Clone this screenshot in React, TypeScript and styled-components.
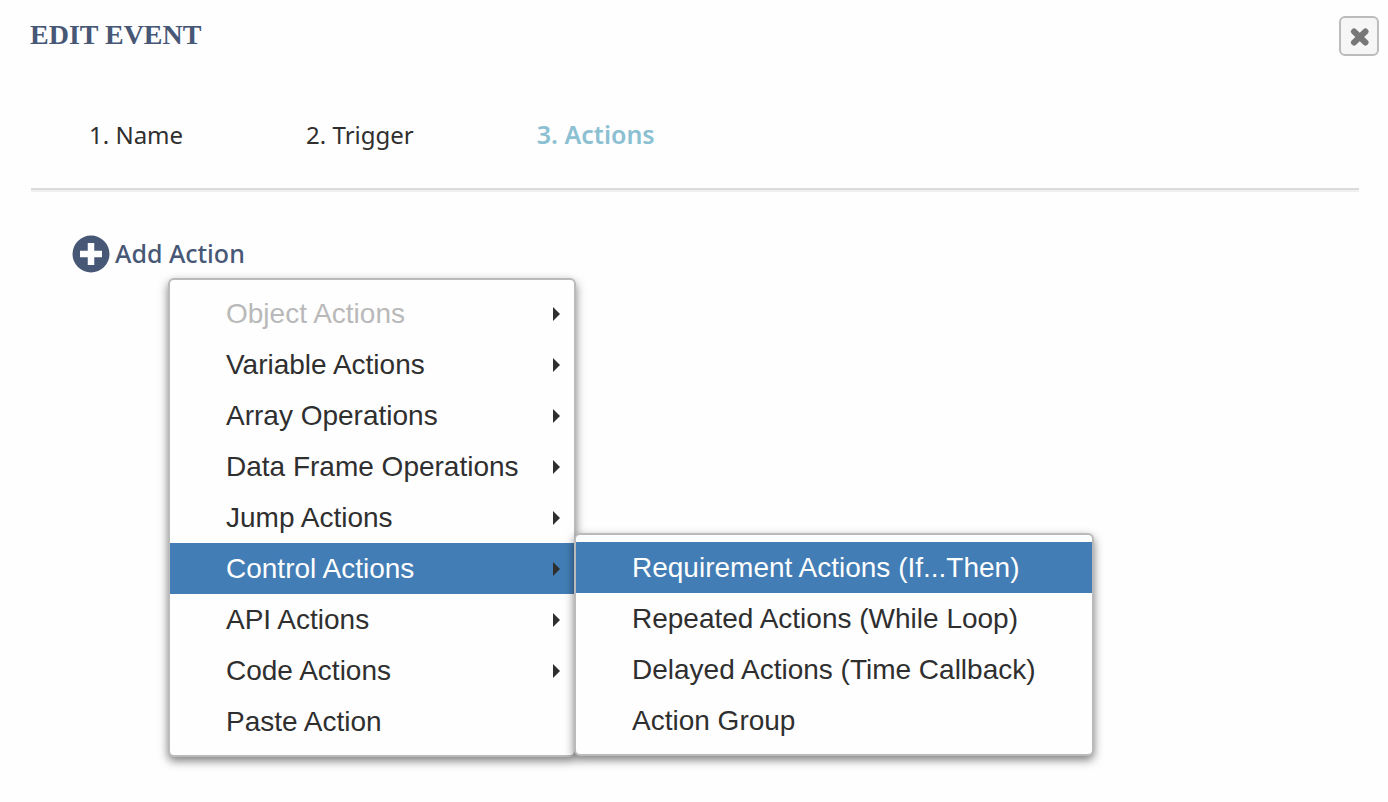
import React from "react";
import styled, { createGlobalStyle } from "styled-components";

const GlobalStyle = createGlobalStyle`
  * {
    box-sizing: border-box;
  }
  body {
    margin: 0;
    background: #fefefe;
    color: #2f2f2f;
    font-family: "Liberation Sans", Helvetica, Arial, sans-serif;
  }
  button {
    font: inherit;
    color: inherit;
    background: none;
    border: 0;
    padding: 0;
    margin: 0;
    cursor: pointer;
  }
  ul, ol {
    list-style: none;
    margin: 0;
    padding: 0;
  }
`;

const Dialog = styled.main`
  min-height: 100vh;
  padding: 16px 29px 40px 30px;
`;

const Header = styled.header`
  display: flex;
  justify-content: space-between;
  align-items: flex-start;
  margin-right: -20px;
`;

const Title = styled.h1`
  margin: 0;
  font-family: "Liberation Serif", "Times New Roman", serif;
  font-size: 28px;
  line-height: 38px;
  font-weight: 700;
  color: #475776;
`;

const CloseButton = styled.button`
  display: flex;
  align-items: center;
  justify-content: center;
  width: 40px;
  height: 40px;
  border: 2px solid #bcbcbc;
  border-radius: 6px;
  background: #f6f6f6;
`;

const Steps = styled.ol`
  display: flex;
  gap: 123px;
  padding: 62px 59px 37px;
`;

const Step = styled.button<{ $active?: boolean }>`
  font-family: "Noto Sans", sans-serif;
  font-size: ${(p) => (p.$active ? 25 : 24)}px;
  line-height: 33px;
  font-weight: ${(p) => (p.$active ? 600 : 400)};
  color: ${(p) => (p.$active ? "#8bc0d2" : "#2f2f2f")};
`;

const Divider = styled.hr`
  height: 4px;
  margin: 0 0 0 1px;
  border: 0;
  border-top: 2px solid #dadcdc;
  background: #f0f0f0;
`;

const ActionArea = styled.section`
  padding: 43px 42px 0;
`;

const MenuAnchor = styled.div`
  position: relative;
  width: fit-content;
`;

const AddButton = styled.button`
  display: flex;
  align-items: center;
  gap: 5px;
  height: 38px;
  font-family: "Noto Sans", sans-serif;
  font-size: 25px;
  line-height: 32px;
  font-weight: 500;
  color: #475776;
`;

const AddLabel = styled.span`
  padding-bottom: 2px;
`;

const Menu = styled.ul`
  position: absolute;
  top: 43px;
  left: 96px;
  width: 408px;
  padding: 8px 0;
  border: 2px solid #bababa;
  border-radius: 6px;
  background: #fefefe;
  box-shadow: 0 4px 10px rgba(0, 0, 0, 0.5);
`;

const Submenu = styled(Menu)`
  top: -10px;
  left: 100%;
  width: 520px;
  padding-top: 7px;
`;

const MenuItem = styled.li`
  position: relative;
`;

const MenuButton = styled.button<{ $selected?: boolean }>`
  display: flex;
  align-items: center;
  justify-content: space-between;
  width: 100%;
  height: 51px;
  padding: 0 14px 0 56px;
  font-size: 28px;
  line-height: 33px;
  white-space: nowrap;
  text-align: left;
  color: ${(p) => (p.$selected ? "#fefefe" : "#2f2f2f")};
  background: ${(p) => (p.$selected ? "#427db5" : "transparent")};

  &:disabled {
    color: #b9b9b9;
  }
`;

const Arrow = () => (
  <svg width="7" height="14" viewBox="0 0 7 14" aria-hidden="true">
    <path d="M0 0L7 7L0 14Z" fill="#2f2f2f" />
  </svg>
);

const CloseIcon = () => (
  <svg width="20" height="20" viewBox="0 0 20 20" aria-hidden="true">
    <path d="M5 5.5L16.5 16.5M16.5 5.5L5 16.5" stroke="#777" strokeWidth="6" strokeLinecap="round" />
  </svg>
);

const PlusIcon = () => (
  <svg width="38" height="38" viewBox="0 0 38 38" aria-hidden="true">
    <circle cx="19" cy="19" r="18.5" fill="#475776" />
    <path d="M19 8V30M8 19H30" stroke="#fefefe" strokeWidth="6.5" />
  </svg>
);

type Entry = { label: string; disabled?: boolean; leaf?: boolean; children?: string[] };

const entries: Entry[] = [
  { label: "Object Actions", disabled: true },
  { label: "Variable Actions" },
  { label: "Array Operations" },
  { label: "Data Frame Operations" },
  { label: "Jump Actions" },
  {
    label: "Control Actions",
    children: [
      "Requirement Actions (If...Then)",
      "Repeated Actions (While Loop)",
      "Delayed Actions (Time Callback)",
      "Action Group",
    ],
  },
  { label: "API Actions" },
  { label: "Code Actions" },
  { label: "Paste Action", leaf: true },
];

export default function App() {
  return (
    <>
      <GlobalStyle />
      <Dialog>
        <Header>
          <Title>EDIT EVENT</Title>
          <CloseButton type="button" aria-label="Close">
            <CloseIcon />
          </CloseButton>
        </Header>
        <Steps>
          <li><Step type="button">1. Name</Step></li>
          <li><Step type="button">2. Trigger</Step></li>
          <li><Step type="button" $active aria-current="step">3. Actions</Step></li>
        </Steps>
        <Divider />
        <ActionArea>
          <MenuAnchor>
            <AddButton type="button" aria-haspopup="menu" aria-expanded="true">
              <PlusIcon />
              <AddLabel>Add Action</AddLabel>
            </AddButton>
            <Menu>
              {entries.map((entry) => (
                <MenuItem key={entry.label}>
                  <MenuButton type="button" disabled={entry.disabled} $selected={!!entry.children}>
                    {entry.label}
                    {!entry.leaf && <Arrow />}
                  </MenuButton>
                  {entry.children && (
                    <Submenu>
                      {entry.children.map((label, i) => (
                        <MenuItem key={label}>
                          <MenuButton type="button" $selected={i === 0}>{label}</MenuButton>
                        </MenuItem>
                      ))}
                    </Submenu>
                  )}
                </MenuItem>
              ))}
            </Menu>
          </MenuAnchor>
        </ActionArea>
      </Dialog>
    </>
  );
}
